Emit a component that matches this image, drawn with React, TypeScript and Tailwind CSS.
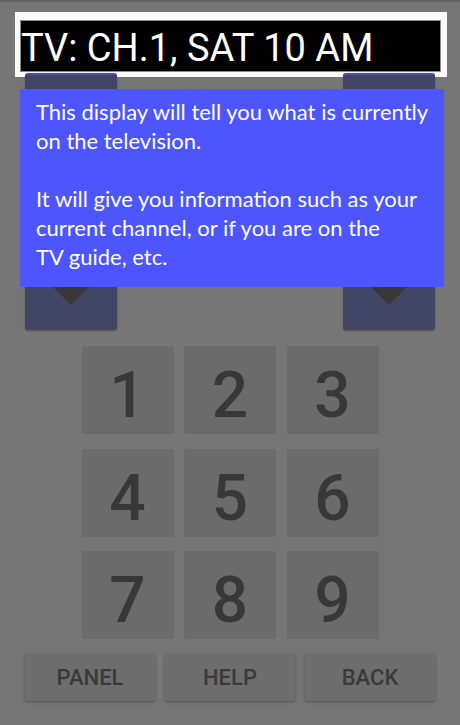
export default function App() {
  const keys = ['1', '2', '3', '4', '5', '6', '7', '8', '9']

  return (
    <div className="relative w-[460px] h-[725px] overflow-hidden bg-[#767676] font-['Roboto',sans-serif]">
      {/* status strip */}
      <div className="h-[2px] bg-[#626262]" />

      {/* TV display */}
      <div className="mt-[10px] ml-[15px] w-[432px] h-[65px] bg-[#fafafa] pt-2 pl-[5px] pr-[6px]">
        <div className="h-[52px] bg-black border border-[#8a8a8a] flex items-center pt-1">
          <span className="text-[38px] leading-none text-white whitespace-nowrap">TV: CH.1, SAT 10 AM</span>
        </div>
      </div>

      {/* channel up / down */}
      <div className="relative -mt-1 flex justify-between px-[25px]">
        <ChannelButton />
        <ChannelButton />
      </div>

      {/* keypad */}
      <div className="mt-4 mx-auto grid w-[297px] grid-cols-[92px_92px_92px] gap-x-[10.5px] gap-y-[14.5px]">
        {keys.map(k => (
          <button
            key={k}
            className="h-[88px] rounded-[2px] bg-[#6b6b6b] flex items-center justify-center pt-3 text-[64px] font-medium leading-none text-[#383838]"
          >
            {k}
          </button>
        ))}
      </div>

      {/* bottom actions */}
      <div className="mt-[15px] flex gap-[10px] px-[25px]">
        {['PANEL', 'HELP', 'BACK'].map(label => (
          <button
            key={label}
            className="h-[47px] w-[130px] rounded-[2px] bg-[#6d6d6d] shadow-[0_1px_3px_rgba(0,0,0,0.35)] flex items-center justify-center text-[22px] font-medium text-[#3a3a3a]"
          >
            {label}
          </button>
        ))}
      </div>

      {/* tutorial popup */}
      <div className="absolute left-[20px] top-[89px] w-[424px] h-[198px] bg-[#4d55fe] pl-4 pt-[8px] text-white text-[22px] leading-[29px] font-['Lato',sans-serif]">
        <p>
          This display will tell you what is currently
          <br />
          on the television.
        </p>
        <p className="mt-[29px]">
          It will give you information such as your
          <br />
          current channel, or if you are on the
          <br />
          TV guide, etc.
        </p>
      </div>
    </div>
  )
}

function ChannelButton() {
  return (
    <div className="w-[92px] h-[257px] rounded-[3px] border-t-2 border-[#4553a8] bg-[#414566] shadow-[0_1px_2px_rgba(0,0,0,0.3)] flex flex-col items-center justify-between pt-4 pb-[25px]">
      <svg width="50" height="25" viewBox="0 0 50 25">
        <path d="M0 25 L25 0 L50 25 Z" fill="#383838" />
      </svg>
      <svg width="50" height="25" viewBox="0 0 50 25">
        <path d="M0 0 L50 0 L25 25 Z" fill="#383838" />
      </svg>
    </div>
  )
}
